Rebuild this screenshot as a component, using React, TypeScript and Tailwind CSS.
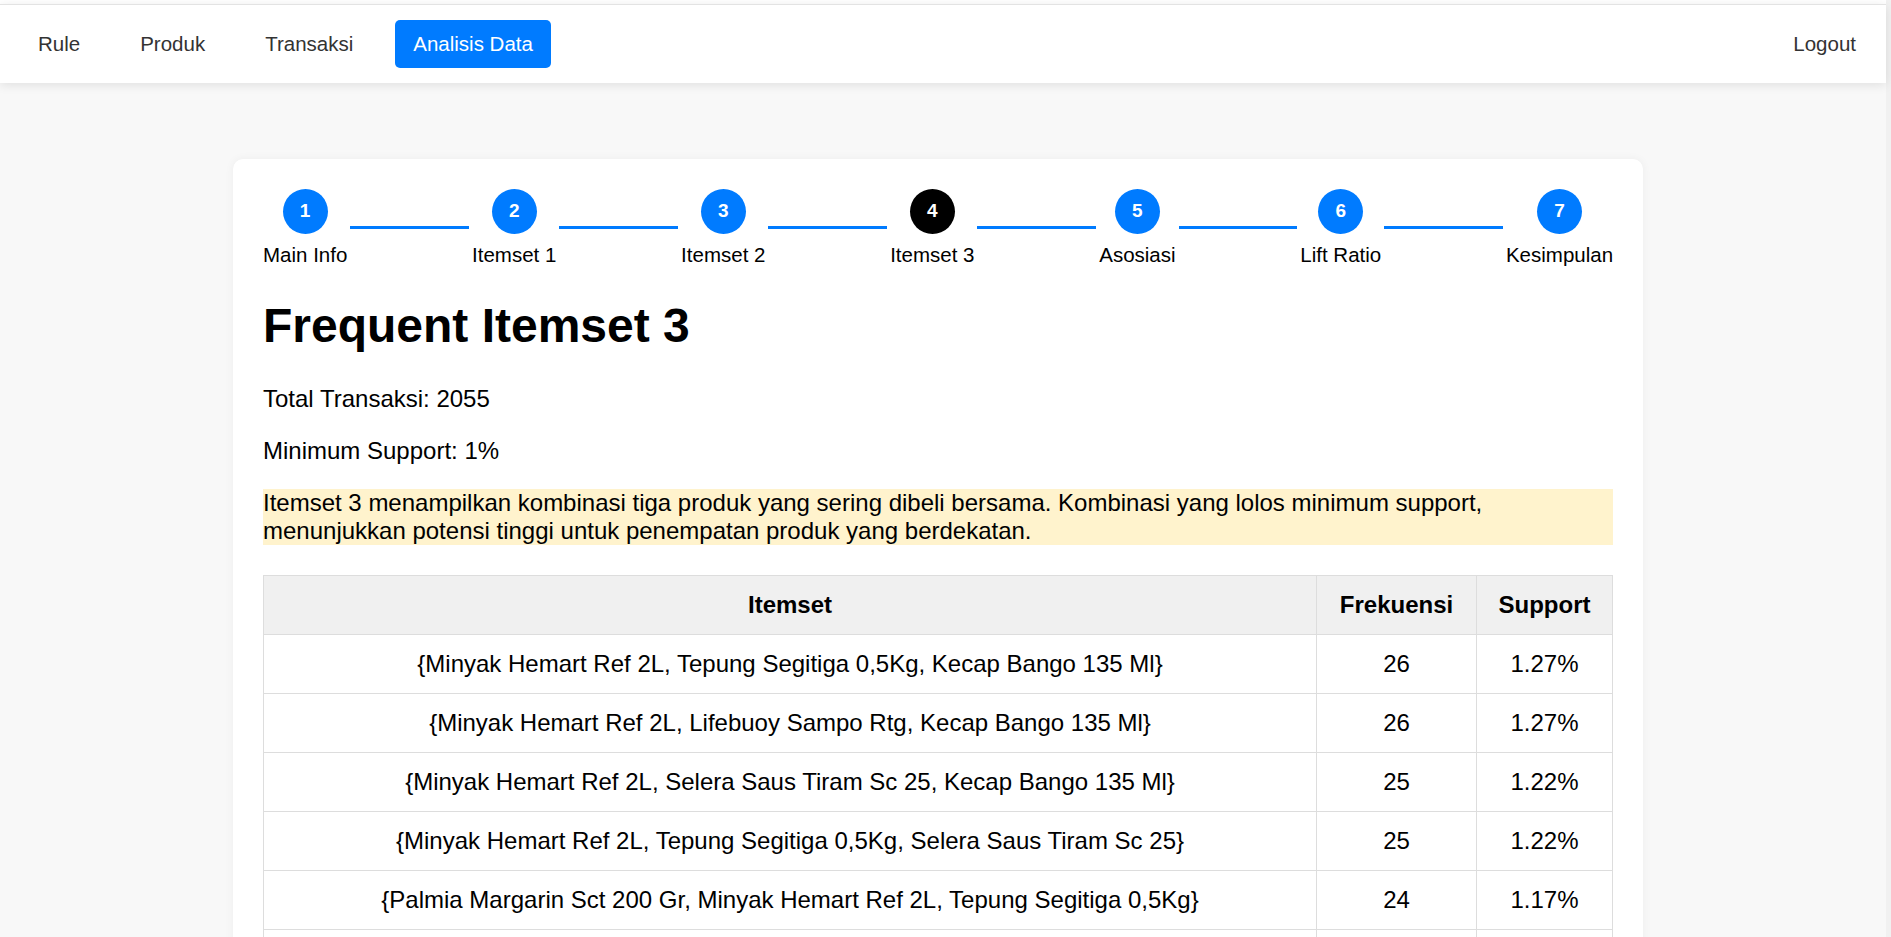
import React, { Fragment } from "react";

const steps = [
  "Main Info",
  "Itemset 1",
  "Itemset 2",
  "Itemset 3",
  "Asosiasi",
  "Lift Ratio",
  "Kesimpulan",
];

const rows: [string, number, string][] = [
  ["{Minyak Hemart Ref 2L, Tepung Segitiga 0,5Kg, Kecap Bango 135 Ml}", 26, "1.27%"],
  ["{Minyak Hemart Ref 2L, Lifebuoy Sampo Rtg, Kecap Bango 135 Ml}", 26, "1.27%"],
  ["{Minyak Hemart Ref 2L, Selera Saus Tiram Sc 25, Kecap Bango 135 Ml}", 25, "1.22%"],
  ["{Minyak Hemart Ref 2L, Tepung Segitiga 0,5Kg, Selera Saus Tiram Sc 25}", 25, "1.22%"],
  ["{Palmia Margarin Sct 200 Gr, Minyak Hemart Ref 2L, Tepung Segitiga 0,5Kg}", 24, "1.17%"],
  ["{Minyak Hemart Ref 2L, Lifebuoy Sampo Rtg, Tepung Segitiga 0,5Kg}", 23, "1.12%"],
];

export default function App() {
  return (
    <div className="flex h-[937px] w-full overflow-hidden bg-[#f8f8f8] font-['Liberation_Sans',Arial,sans-serif] text-black">
      <div className="flex min-w-0 flex-1 flex-col">
        <div className="h-[4px] shrink-0 bg-white" />
        <nav className="relative z-10 flex h-[79px] shrink-0 items-center justify-between border-t border-[#e3e3e3] bg-white pl-5 pr-3 shadow-[0_2px_10px_rgba(0,0,0,0.1)]">
          <div className="flex items-center gap-6 text-[20.5px] text-[#333]">
            <a className="px-[18px]">Rule</a>
            <a className="px-[18px]">Produk</a>
            <a className="px-[18px]">Transaksi</a>
            <a className="flex h-[48px] items-center rounded-[5px] bg-[#007bff] px-[18px] text-white">
              Analisis Data
            </a>
          </div>
          <a className="px-[18px] text-[20.5px] text-[#333]">Logout</a>
        </nav>
        <main className="pr-[10px] pt-[76px]">
          <div className="mx-auto w-[1410px] rounded-[10px] bg-white p-[30px] shadow-[0_0_10px_rgba(0,0,0,0.05)]">
            <div className="flex items-center">
              {steps.map((label, i) => (
                <Fragment key={label}>
                  {i > 0 && <div className="mx-[3px] h-[3px] flex-1 bg-[#007bff]" />}
                  <div className="flex flex-col items-center">
                    <div
                      className={
                        i === 3
                          ? "flex h-[45px] w-[45px] items-center justify-center rounded-full bg-black text-[19px] font-bold text-white"
                          : "flex h-[45px] w-[45px] items-center justify-center rounded-full bg-[#007bff] text-[19px] font-bold text-white"
                      }
                    >
                      {i + 1}
                    </div>
                    <div className="mt-[9px] whitespace-nowrap text-[20.5px] leading-[23px]">{label}</div>
                  </div>
                </Fragment>
              ))}
            </div>

            <h1 className="mb-[32px] mt-[32px] text-[48px] font-bold leading-[55px]">Frequent Itemset 3</h1>

            <p className="mb-[24px] text-[24px] leading-[28px]">Total Transaksi: 2055</p>
            <p className="mb-[24px] text-[24px] leading-[28px]">Minimum Support: 1%</p>
            <p className="bg-[#fff3cd] text-[24px] leading-[28px]">
              Itemset 3 menampilkan kombinasi tiga produk yang sering dibeli bersama. Kombinasi yang lolos minimum support,
              <br />
              menunjukkan potensi tinggi untuk penempatan produk yang berdekatan.
            </p>

            <table className="mt-[30px] w-full table-fixed border-collapse text-[24px] leading-[28px]">
              <colgroup>
                <col />
                <col className="w-[160px]" />
                <col className="w-[136px]" />
              </colgroup>
              <thead>
                <tr className="bg-[#f0f0f0]">
                  <th className="border border-[#dddddd] py-[15px] text-center font-bold">Itemset</th>
                  <th className="border border-[#dddddd] py-[15px] text-center font-bold">Frekuensi</th>
                  <th className="border border-[#dddddd] py-[15px] text-center font-bold">Support</th>
                </tr>
              </thead>
              <tbody>
                {rows.map(([items, freq, sup]) => (
                  <tr key={items}>
                    <td className="border border-[#dddddd] py-[15px] text-center">{items}</td>
                    <td className="border border-[#dddddd] py-[15px] text-center">{freq}</td>
                    <td className="border border-[#dddddd] py-[15px] text-center">{sup}</td>
                  </tr>
                ))}
              </tbody>
            </table>
          </div>
        </main>
      </div>
      <div className="w-[5px] shrink-0 bg-[#f1f1f1]" />
    </div>
  );
}
